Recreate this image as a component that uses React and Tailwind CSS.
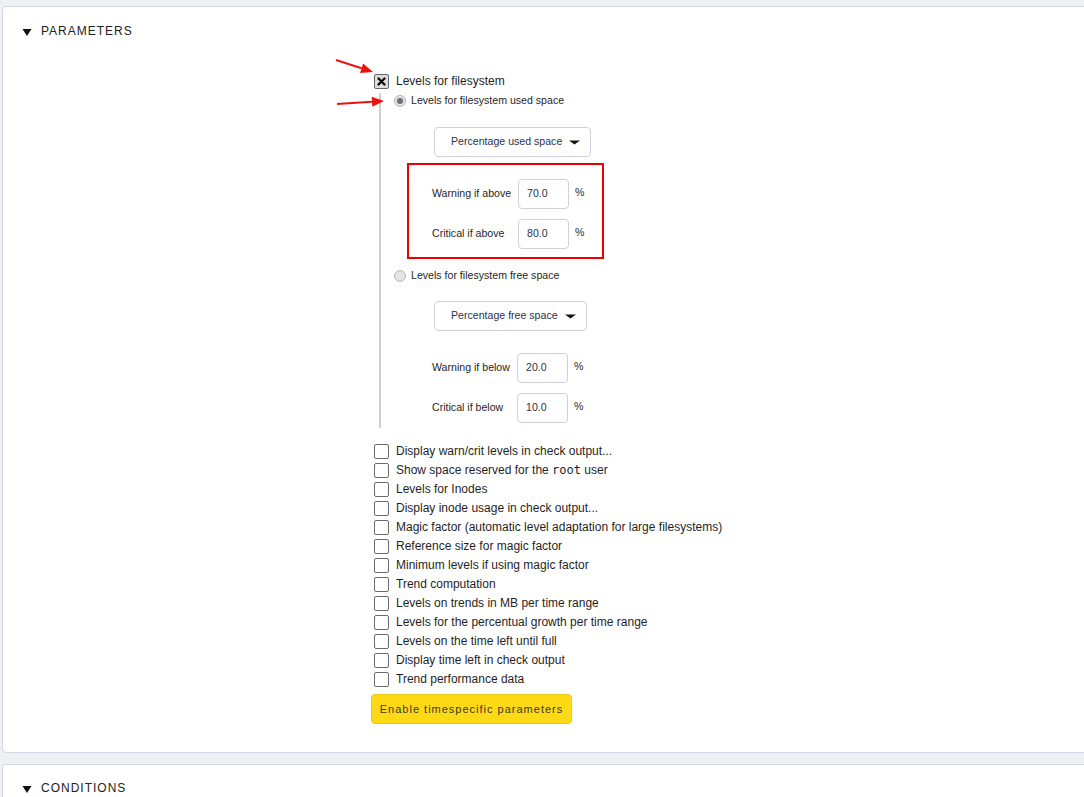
import React from 'react'

const font = { fontFamily: '"Liberation Sans", Arial, sans-serif' }

function Triangle() {
  return (
    <svg width="10" height="8" viewBox="0 0 10 8" className="shrink-0">
      <path d="M0.5 1 L9.5 1 L5 8 Z" fill="#111" />
    </svg>
  )
}

function Checkbox({ checked }) {
  if (checked) {
    return (
      <span className="w-[15px] h-[15px] rounded-[2px] border border-[#666] bg-[#dcdcdc] flex items-center justify-center shrink-0">
        <svg width="9" height="9" viewBox="0 0 9 9">
          <path d="M1.5 1.5 L7.5 7.5 M7.5 1.5 L1.5 7.5" stroke="#000" strokeWidth="2.2" strokeLinecap="round" />
        </svg>
      </span>
    )
  }
  return <span className="w-[15px] h-[15px] rounded-[2px] border border-[#6b6b6b] bg-white shrink-0" />
}

function Radio({ checked }) {
  return (
    <span className="w-[12px] h-[12px] rounded-full border border-[#b4b4b4] bg-[#e4e4e4] flex items-center justify-center shrink-0">
      {checked && <span className="w-[6px] h-[6px] rounded-full bg-[#707070]" />}
    </span>
  )
}

function Dropdown({ label, width }) {
  return (
    <div className={`h-[30px] ${width} border border-[#cfd1de] rounded-[4px] bg-white flex items-center pl-[16px] pr-[10px] justify-between`}>
      <span className="text-[10.6px] text-[#2f3147]">{label}</span>
      <svg width="11" height="5" viewBox="0 0 11 5">
        <path d="M0 0.5 L11 0.5 L5.5 4.5 Z" fill="#111" />
      </svg>
    </div>
  )
}

function LevelRow({ label, value, labelW }) {
  return (
    <div className="flex items-center h-[30px]">
      <span className={`text-[10.6px] text-[#1f1f1f] ${labelW}`}>{label}</span>
      <div className="w-[51px] h-[30px] border border-[#cfd1de] rounded-[4px] bg-white flex items-center pl-[8px] text-[10.6px] text-[#2f3147]">
        {value}
      </div>
      <span className="text-[10.6px] text-[#1f1f1f] ml-[6px] -mt-[3px]">%</span>
    </div>
  )
}

function Arrow({ x1, y1, x2, y2 }) {
  const ang = Math.atan2(y2 - y1, x2 - x1)
  const len = 12
  const w = 5
  const bx = x2 - len * Math.cos(ang)
  const by = y2 - len * Math.sin(ang)
  const px = -Math.sin(ang) * w
  const py = Math.cos(ang) * w
  return (
    <g>
      <line x1={x1} y1={y1} x2={bx} y2={by} stroke="#e8150f" strokeWidth="2" />
      <path d={`M${x2} ${y2} L${bx + px} ${by + py} L${bx - px} ${by - py} Z`} fill="#e8150f" />
    </g>
  )
}

const options = [
  'Display warn/crit levels in check output...',
  'SHOW_ROOT',
  'Levels for Inodes',
  'Display inode usage in check output...',
  'Magic factor (automatic level adaptation for large filesystems)',
  'Reference size for magic factor',
  'Minimum levels if using magic factor',
  'Trend computation',
  'Levels on trends in MB per time range',
  'Levels for the percentual growth per time range',
  'Levels on the time left until full',
  'Display time left in check output',
  'Trend performance data',
]

export default function App() {
  return (
    <div className="min-h-[797px] w-[1084px] overflow-hidden bg-[#eef0f4] pt-[6px] pl-[2px] relative" style={font}>
      <div className="w-[1100px] bg-white border border-[#d3d6e0] rounded-[4px]">
        <div className="flex items-center gap-[9px] pl-[19px] pt-[9px] h-[40px]">
          <Triangle />
          <span className="text-[12px] tracking-[1px] text-[#222] -mt-[2px]">PARAMETERS</span>
        </div>

        <div className="pl-[371px] pt-[25px] pb-[28px] text-[#1f1f1f]">
          <div className="flex items-center gap-[7px] h-[19px]">
            <Checkbox checked />
            <span className="text-[12px] -mt-[2px]">Levels for filesystem</span>
          </div>

          <div className="ml-[5px] mt-[2px] border-l-2 border-[#cfcfcf] pl-[13px] pb-[5px]">
            <div className="flex items-center gap-[5px] h-[16px]">
              <Radio checked />
              <span className="text-[10.6px] -mt-[1px]">Levels for filesystem used space</span>
            </div>
            <div className="ml-[40px] mt-[18px]">
              <Dropdown label="Percentage used space" width="w-[157px]" />
            </div>
            <div className="ml-[38px] mt-[22px] flex flex-col gap-[10px] relative">
              <div className="absolute left-[-25px] top-[-16px] w-[197px] h-[96px] border-2 border-[#ee0000]" />
              <LevelRow label="Warning if above" value="70.0" labelW="w-[86px]" />
              <LevelRow label="Critical if above" value="80.0" labelW="w-[86px]" />
            </div>

            <div className="flex items-center gap-[5px] h-[16px] mt-[19px]">
              <Radio />
              <span className="text-[10.6px] -mt-[1px]">Levels for filesystem free space</span>
            </div>
            <div className="ml-[40px] mt-[17px]">
              <Dropdown label="Percentage free space" width="w-[153px]" />
            </div>
            <div className="ml-[38px] mt-[22px] flex flex-col gap-[10px]">
              <LevelRow label="Warning if below" value="20.0" labelW="w-[85px]" />
              <LevelRow label="Critical if below" value="10.0" labelW="w-[85px]" />
            </div>
          </div>

          <div className="mt-[14px] flex flex-col">
            {options.map((o) => (
              <div key={o} className="flex items-center gap-[7px] h-[19px]">
                <Checkbox />
                {o === 'SHOW_ROOT' ? (
                  <span className="text-[12px] -mt-[2px]">
                    Show space reserved for the{' '}
                    <span className="text-[12px]" style={{ fontFamily: '"DejaVu Sans Mono", monospace' }}>root</span> user
                  </span>
                ) : (
                  <span className="text-[12px] -mt-[2px]">{o}</span>
                )}
              </div>
            ))}
          </div>

          <button className="mt-[5px] -ml-[3px] h-[30px] w-[201px] rounded-[4px] bg-[#fdd916] border border-[#e9ca1c] text-[11px] tracking-[1px] text-[#3a3a2a]">
            Enable timespecific parameters
          </button>
        </div>
      </div>

      <div className="w-[1100px] mt-[11px] bg-white border border-[#d3d6e0] rounded-[4px] h-[60px]">
        <div className="flex items-center gap-[9px] pl-[19px] pt-[16px]">
          <Triangle />
          <span className="text-[12px] tracking-[1px] text-[#222] -mt-[2px]">CONDITIONS</span>
        </div>
      </div>

      <svg className="absolute left-0 top-0 pointer-events-none" width="1084" height="797">
        <Arrow x1={336} y1={60} x2={373} y2={72} />
        <Arrow x1={337} y1={104} x2={384} y2={101} />
      </svg>
    </div>
  )
}
